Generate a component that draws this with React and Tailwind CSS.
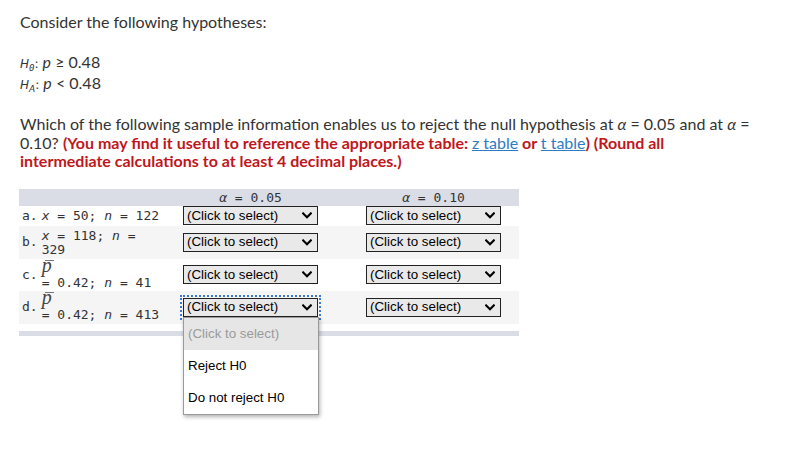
import React from "react";

function Chevron() {
  return (
    <svg width="10" height="7" viewBox="0 0 10 7" className="shrink-0">
      <path d="M1.2 1.4 L5 5.2 L8.8 1.4" fill="none" stroke="#000" strokeWidth="2.1" strokeLinecap="square" />
    </svg>
  );
}

function Sel({ focused, open }) {
  return (
    <div className="relative w-[135px]">
      {focused ? (
        <div className="flex h-[19px] w-[135px] items-center justify-between border border-[#222] bg-[#e9e9e9] pl-[3px] pr-[5px] font-['Liberation_Sans',Arial,sans-serif] text-[13.33px] leading-none text-black outline-2 outline-offset-1 outline-dotted outline-[#3b78d0]">
          <span>(Click to select)</span>
          <Chevron />
        </div>
      ) : (
        <div className="flex h-[19px] w-[135px] items-center justify-between border border-[#222] bg-[#e9e9e9] pl-[3px] pr-[5px] font-['Liberation_Sans',Arial,sans-serif] text-[13.33px] leading-none text-black">
          <span>(Click to select)</span>
          <Chevron />
        </div>
      )}
      {open && (
        <div className="absolute left-0 top-full z-10 w-[136px] border border-[#9a9a9a] bg-white font-['Liberation_Sans',Arial,sans-serif] text-[13.33px] shadow-[1px_2px_4px_rgba(0,0,0,0.3)]">
          <div className="flex h-[32px] items-center bg-[#e6e6e6] pl-[4px] text-[#9a9a9a]">(Click to select)</div>
          <div className="flex h-[32px] items-center pl-[4px] text-black">Reject H0</div>
          <div className="flex h-[32px] items-center pl-[4px] text-black">Do not reject H0</div>
        </div>
      )}
    </div>
  );
}

function PBar() {
  return (
    <span className="relative block h-[16px]">
      <span className="absolute left-[3px] top-[0px] h-[1px] w-[9px] bg-[#777]" />
      <span className="block font-['Liberation_Serif','DejaVu_Serif',serif] text-[20px] italic leading-[10px] text-[#444]">p</span>
    </span>
  );
}

function I({ children }) {
  return <span className="italic">{children}</span>;
}

export default function App() {
  return (
    <div className="min-h-[452px] w-[799px] bg-white pl-[20px] pt-[12px] text-[#333]">
      <div className="font-['Lato','Open_Sans',sans-serif] text-[16px] leading-[20px]">Consider the following hypotheses:</div>

      <div className="mt-[19px] font-['Lato','Open_Sans',sans-serif] text-[16px] leading-[21px]">
        <div className="h-[21px]">
          <span className="font-['DejaVu_Sans',sans-serif] text-[12px] italic">H</span>
          <span className="relative top-[3px] font-['DejaVu_Sans_Mono',monospace] text-[9px] italic leading-none">0</span>
          <span className="font-['DejaVu_Sans',sans-serif] text-[12px]">:</span>{" "}
          <I>p</I> ≥ 0.48
        </div>
        <div className="h-[21px]">
          <span className="font-['DejaVu_Sans',sans-serif] text-[12px] italic">H</span>
          <span className="relative top-[3px] font-['DejaVu_Sans',sans-serif] text-[9px] italic leading-none">A</span>
          <span className="font-['DejaVu_Sans',sans-serif] text-[12px]">:</span>{" "}
          <I>p</I> &lt; 0.48
        </div>
      </div>

      <div className="mt-[22px] w-[734px] font-['Lato','Open_Sans',sans-serif] text-[16px] leading-[18.5px]">
        Which of the following sample information enables us to reject the null hypothesis at <I>α</I> = 0.05 and at <I>α</I> = 0.10?{" "}
        <span className="font-bold text-[#c0161c]">
          (You may find it useful to reference the appropriate table:{" "}
          <span className="font-normal text-[#2f7bc4] underline">z table</span> or{" "}
          <span className="font-normal text-[#2f7bc4] underline">t table</span>) (Round all intermediate calculations to at least 4 decimal places.)
        </span>
      </div>

      <div className="ml-[-1px] mt-[18px] w-[500px] font-['DejaVu_Sans_Mono',monospace] text-[13px] text-[#333]">
        <div className="flex h-[17px] items-center bg-[#dadde6]">
          <div className="w-[162px]" />
          <div className="w-[183px] pl-[2px]">
            <div className="w-[135px] text-center leading-none">
              <I>α</I> = 0.05
            </div>
          </div>
          <div className="w-[155px] pl-[2px]">
            <div className="w-[135px] text-center leading-none">
              <I>α</I> = 0.10
            </div>
          </div>
        </div>

        <div className="flex h-[20px] items-center">
          <div className="flex w-[162px] items-center pl-[3px]">
            <span>a.</span>
            <span className="ml-[4px] whitespace-nowrap">
              <I>x</I> = 50; <I>n</I> = 122
            </span>
          </div>
          <div className="w-[183px] pl-[2px]"><Sel /></div>
          <div className="w-[155px] pl-[2px]"><Sel /></div>
        </div>

        <div className="flex h-[33px] items-center bg-[#f5f5f5]">
          <div className="flex w-[162px] items-center pl-[3px]">
            <span>b.</span>
            <span className="ml-[4px] flex w-[121px] flex-col">
              <span className="whitespace-nowrap leading-[15px]"><I>x</I> = 118; <I>n</I> =</span>
              <span className="leading-[14px]">329</span>
            </span>
          </div>
          <div className="w-[183px] pl-[2px]"><Sel /></div>
          <div className="w-[155px] pl-[2px]"><Sel /></div>
        </div>

        <div className="flex h-[32px] items-center">
          <div className="flex w-[162px] items-center pl-[3px]">
            <span>c.</span>
            <span className="ml-[4px] flex flex-col">
              <PBar />
              <span className="whitespace-nowrap leading-[14px]">= 0.42; <I>n</I> = 41</span>
            </span>
          </div>
          <div className="w-[183px] pl-[2px]"><Sel /></div>
          <div className="w-[155px] pl-[2px]"><Sel /></div>
        </div>

        <div className="flex h-[33px] items-center bg-[#f5f5f5]">
          <div className="flex w-[162px] items-center pl-[3px]">
            <span>d.</span>
            <span className="ml-[4px] flex flex-col">
              <PBar />
              <span className="whitespace-nowrap leading-[14px]">= 0.42; <I>n</I> = 413</span>
            </span>
          </div>
          <div className="w-[183px] pl-[2px]"><Sel focused open /></div>
          <div className="w-[155px] pl-[2px]"><Sel /></div>
        </div>

        <div className="mt-[7px] h-[5px] bg-[#dadde6]" />
      </div>
    </div>
  );
}
